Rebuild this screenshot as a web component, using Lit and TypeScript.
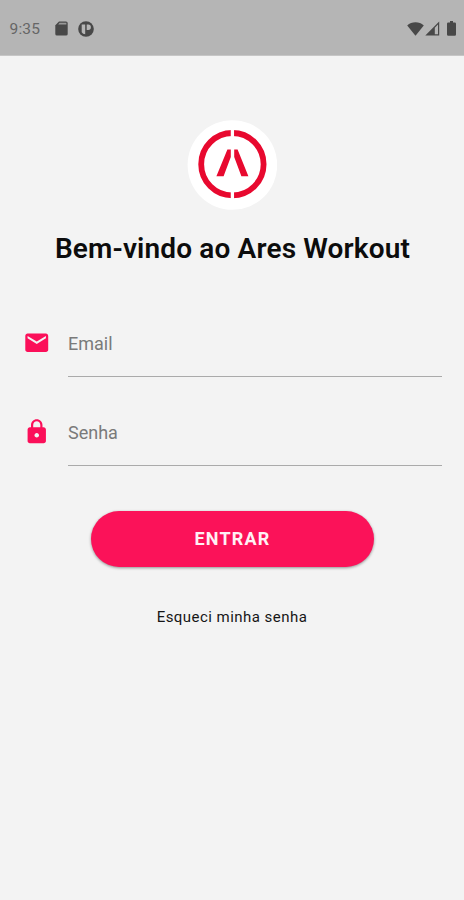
import { LitElement, html, css, svg } from "lit";
import { customElement, property } from "lit/decorators.js";

const mail = svg`<path d="M20 4H4c-1.1 0-2 .9-2 2v12c0 1.1.9 2 2 2h16c1.1 0 2-.9 2-2V6c0-1.1-.9-2-2-2zm0 4l-8 5-8-5V6l8 5 8-5v2z"/>`;
const lock = svg`<path d="M18 8h-1V6c0-2.76-2.24-5-5-5S7 3.24 7 6v2H6c-1.1 0-2 .9-2 2v10c0 1.1.9 2 2 2h12c1.1 0 2-.9 2-2V10c0-1.1-.9-2-2-2zm-6 9c-1.1 0-2-.9-2-2s.9-2 2-2 2 .9 2 2-.9 2-2 2zm3.1-9H8.9V6c0-1.71 1.39-3.1 3.1-3.1s3.1 1.39 3.1 3.1v2z"/>`;

@customElement("status-bar")
class StatusBar extends LitElement {
  static styles = css`
    :host {
      display: flex;
      align-items: center;
      box-sizing: border-box;
      height: 56px;
      padding: 2px 8px 0 9.5px;
      background: #b5b5b5;
      border-bottom: 1px solid #c6c6c6;
      color: #666;
      fill: #484848;
      font-size: 15.5px;
    }
    .time { width: 45px; letter-spacing: 0.2px; }
    svg { display: block; flex: none; }
    .pocket { margin-left: 10px; }
    .wifi { margin-left: auto; }
    .signal { margin-left: 1.5px; }
    .battery { margin-left: 7px; }
  `;
  render() {
    return html`
      <span class="time">9:35</span>
      <svg width="13" height="15" viewBox="0 0 13 15">
        <path d="M4 .5h7q1.7 0 1.7 1.600v10.800q0 1.600-1.700 1.600H1.900Q.3 14.500.3 12.900V4.300z"/>
        <path d="M4.600 1.800h6.800v1.700H3.200z" fill="#999"/>
      </svg>
      <svg class="pocket" width="16" height="16" viewBox="0 0 16 16">
        <circle cx="8" cy="8" r="7.800"/>
        <path fill="#b5b5b5" d="M3.700 3.500h3.500v9.800q-2.400-.2-3.500-2zM8.700 3.500h1.600q2.600 0 2.600 2.700t-2.600 2.700H8.700z"/>
      </svg>
      <svg class="wifi" width="17" height="14" viewBox="0 0 17 14">
        <path d="M8.500 13.800L.2 3.400Q3.700.3 8.500.3t8.300 3.100z"/>
      </svg>
      <svg class="signal" width="15" height="15" viewBox="0 0 15 15">
        <path d="M.3 14.500L14.200.500v14zM9.800 6.800v6.500h3.200v-9.700z" fill-rule="evenodd"/>
      </svg>
      <svg class="battery" width="9" height="15" viewBox="0 0 9 15">
        <path d="M3 0h3v1.500h1.700q1.300 0 1.300 1.300v10.700q0 1.300-1.300 1.300H1.300Q0 14.800 0 13.500V2.800q0-1.300 1.300-1.300H3z"/>
      </svg>
    `;
  }
}

@customElement("login-field")
class LoginField extends LitElement {
  @property() label = "";
  @property() icon = "mail";
  static styles = css`
    :host { display: flex; height: 55px; padding: 0 22px; }
    svg { width: 27.5px; height: 27.5px; margin: 7.4px 17.7px 0 0.8px; fill: #fb0f59; flex: none; }
    .line {
      flex: 1;
      height: 54px;
      border-bottom: 1px solid #aaa;
      color: #7a7a7a;
      font-size: 18px;
      line-height: 44px;
    }
  `;
  render() {
    return html`
      <svg viewBox="0 0 24 24">${this.icon === "mail" ? mail : lock}</svg>
      <div class="line">${this.label}</div>
    `;
  }
}

@customElement("app-root")
class AppRoot extends LitElement {
  static styles = css`
    :host {
      display: flex;
      flex-direction: column;
      height: 900px;
      background: #f3f3f3;
      font-family: Roboto, sans-serif;
    }
    .logo { display: block; width: 90px; height: 90px; margin: 64px auto 0; }
    h1 {
      margin: 19px 0 0;
      padding-left: 1px;
      font-size: 28px;
      line-height: 40px;
      font-weight: 600;
      letter-spacing: 0.15px;
      color: #0c0c0c;
      text-align: center;
      white-space: nowrap;
    }
    .fields { display: grid; gap: 34px; margin-top: 53px; }
    button {
      width: 283px;
      height: 56px;
      margin: 45px 0 0 91px;
      padding: 0;
      border: 0;
      border-radius: 28px;
      background: #fb1259;
      box-shadow: 0 1px 3px rgba(0, 0, 0, 0.4);
      color: #fff0f4;
      font: 700 18px/56px Roboto, sans-serif;
      letter-spacing: 1.2px;
    }
    .forgot {
      margin-top: 40px;
      color: #161616;
      font-size: 15px;
      line-height: 20px;
      letter-spacing: 0.46px;
      text-align: center;
    }
  `;
  render() {
    return html`
      <status-bar></status-bar>
      <svg class="logo" viewBox="0 0 90 90">
        <circle cx="45.400" cy="45" r="44.800" fill="#fff"/>
        <circle cx="45.400" cy="44.200" r="31.200" fill="none" stroke="#e8092f" stroke-width="5.800"/>
        <path d="M45.400 8v72" stroke="#fff" stroke-width="3.300"/>
        <path fill="#e8092f" d="M40.400 29.500H43.800V37L36.600 56.200H29.400zM47.200 29.500H50.600L61.400 56.200H54.400L47.200 37z"/>
      </svg>
      <h1>Bem-vindo ao Ares Workout</h1>
      <div class="fields">
        <login-field label="Email" icon="mail"></login-field>
        <login-field label="Senha" icon="lock"></login-field>
      </div>
      <button>ENTRAR</button>
      <div class="forgot">Esqueci minha senha</div>
    `;
  }
}
